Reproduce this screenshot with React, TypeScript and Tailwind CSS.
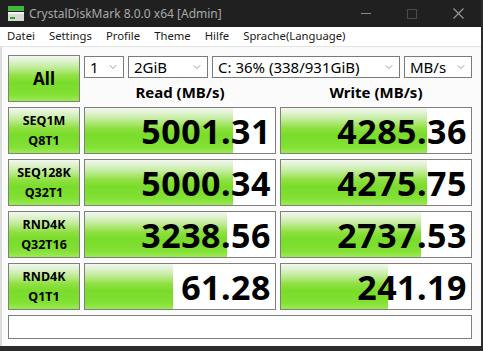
import { ChevronDown } from 'lucide-react'

const FONT = { fontFamily: "'Noto Sans', 'Open Sans', sans-serif" }

const GREEN =
  'bg-[linear-gradient(to_bottom,#f4f6f2_0%,#c9eea8_22%,#8fe040_45%,#79dc2a_60%,#82e034_85%,#9aea52_100%)]'

type Row = { name: string; sub: string; read: number; write: number }

const ROWS: Row[] = [
  { name: 'SEQ1M', sub: 'Q8T1', read: 5001.31, write: 4285.36 },
  { name: 'SEQ128K', sub: 'Q32T1', read: 5000.34, write: 4275.75 },
  { name: 'RND4K', sub: 'Q32T16', read: 3238.56, write: 2737.53 },
  { name: 'RND4K', sub: 'Q1T1', read: 61.28, write: 241.19 },
]

// log-scaled meter, like CrystalDiskMark
function barWidth(v: number) {
  return Math.max(0, Math.round(31.9 + Math.log10(v) * 31.4))
}

function Select({ label, w }: { label: string; w: string }) {
  return (
    <div className={`${w} h-[22px] border border-[#7a7a7a] bg-white flex items-center justify-between pl-[5px] pr-[4px]`}>
      <span className="text-[15px] text-black leading-none">{label}</span>
      <ChevronDown className="h-[12px] w-[12px] text-[#666]" strokeWidth={1.3} />
    </div>
  )
}

function Cell({ value }: { value: number }) {
  return (
    <div className="relative h-[47px] border border-[#7f7f7f] bg-white overflow-hidden">
      <div className={`absolute left-0 top-0 bottom-0 ${GREEN}`} style={{ width: barWidth(value) }} />
      <div className="relative h-full flex items-center justify-end pr-[4px] text-[34px] font-bold text-black leading-none tracking-[0.5px]">
        {value.toFixed(2)}
      </div>
    </div>
  )
}

export default function App() {
  return (
    <div className="w-[483px] h-[351px] bg-[#2b2b2b] overflow-hidden" style={FONT}>
      <div className="w-[481px] h-[346px] flex flex-col bg-[#fbfbfb]">
        {/* Title bar */}
        <div className="h-[27px] bg-[#202020] flex items-center pl-[8px] text-[12px] text-[#a8a8a8]">
          <svg width="16" height="15" viewBox="0 0 16 15" className="mr-[5px]">
            <rect x="0" y="0" width="16" height="5" fill="#3fb83f" />
            <rect x="0" y="6" width="16" height="9" fill="#d8d8d8" />
            <rect x="0" y="6" width="16" height="2" fill="#f2f2f2" />
            <rect x="2" y="11" width="5" height="2" fill="#2da82d" />
          </svg>
          <span>CrystalDiskMark 8.0.0 x64 [Admin]</span>
          <div className="ml-auto flex items-center">
            <div className="w-[10px] h-px bg-[#8a8a8a] mr-[36px]" />
            <div className="w-[10px] h-[10px] border border-[#4a4a4a] mr-[36px]" />
            <svg width="11" height="11" viewBox="0 0 11 11" className="mr-[17px]">
              <path d="M0.5 0.5 L10.5 10.5 M10.5 0.5 L0.5 10.5" stroke="#9a9a9a" strokeWidth="1.1" />
            </svg>
          </div>
        </div>

        {/* Menu bar */}
        <div className="h-[20px] bg-white flex items-center gap-[14px] pl-[7px] text-[11.3px] text-[#1a1a1a] border-b border-[#e2e2e2]">
          <span>Datei</span>
          <span>Settings</span>
          <span>Profile</span>
          <span>Theme</span>
          <span>Hilfe</span>
          <span>Sprache(Language)</span>
        </div>

        {/* Content */}
        <div className="flex-1 flex flex-col gap-[5px] pl-[8px] pt-[8px] border-l-2 border-[#dcdcdc]">
          <div className="flex gap-[4px] -ml-[2px]">
            <div className={`w-[72px] h-[47px] border border-[#7f7f7f] ${GREEN} flex items-center justify-center text-[17px] font-bold text-black`}>
              All
            </div>
            <div className="flex flex-col">
              <div className="flex gap-[4px] mt-[1px]">
                <Select label="1" w="w-[40px]" />
                <Select label="2GiB" w="w-[80px]" />
                <Select label="C: 36% (338/931GiB)" w="w-[188px]" />
                <Select label="MB/s" w="w-[68px]" />
              </div>
              <div className="grid grid-cols-[192px_192px] gap-[4px] h-[24px] items-end">
                <div className="text-center text-[15px] font-bold text-black leading-[18px] pb-[1px]">Read (MB/s)</div>
                <div className="text-center text-[15px] font-bold text-black leading-[18px] pb-[1px]">Write (MB/s)</div>
              </div>
            </div>
          </div>

          {ROWS.map((r) => (
            <div key={r.name + r.sub} className="grid grid-cols-[72px_192px_192px] gap-[4px] -ml-[2px]">
              <div className={`h-[47px] border border-[#7f7f7f] ${GREEN} flex flex-col items-center justify-center gap-[6px] text-[12.5px] font-bold text-black leading-[14px]`}>
                <span>{r.name}</span>
                <span>{r.sub}</span>
              </div>
              <Cell value={r.read} />
              <Cell value={r.write} />
            </div>
          ))}

          <div className="w-[464px] h-[24px] border border-[#7f7f7f] bg-white -ml-[2px]" />
        </div>
      </div>
    </div>
  )
}
